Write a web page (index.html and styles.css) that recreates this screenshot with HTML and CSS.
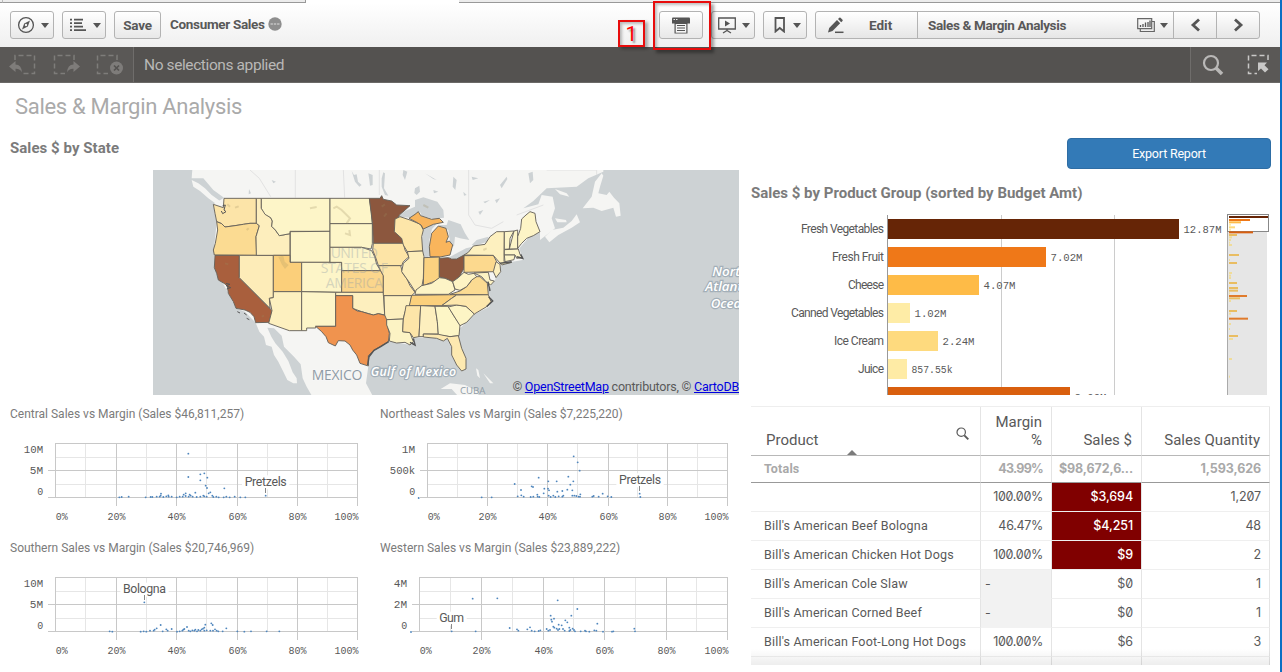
FILE: index.html
```html
<!DOCTYPE html>
<html lang="en">
<head>
<meta charset="utf-8">
<title>Consumer Sales - Sales &amp; Margin Analysis</title>
<link rel="stylesheet" href="styles.css">
</head>
<body>
<div class="app">
  <div class="tabstrip"><span class="tab-a"></span><span class="tab-b"></span><span class="tab-active"></span><span class="tab-rest"></span></div>

  <header class="toolbar">
    <button class="btn icon-btn">
      <svg width="18" height="18" viewBox="0 0 18 18"><circle cx="9" cy="9" r="7.4" fill="none" stroke="#555" stroke-width="1.3"/><path d="M13 4.5 10.8 10.6 5 13.5 7.2 7.4Z" fill="#555"/><circle cx="9" cy="9" r="1.2" fill="#eee"/></svg>
      <i class="caret"></i>
    </button>
    <button class="btn icon-btn">
      <svg width="18" height="14" viewBox="0 0 18 14"><path d="M1 2h2M1 5.500h2M1 9h2M1 12.500h2M5 2h9M5 5.500h8M5 9h9M5 12.500h12" stroke="#555" stroke-width="1.8" transform="translate(0 -.4)"/></svg>
      <i class="caret"></i>
    </button>
    <button class="btn save">Save</button>
    <span class="app-name">Consumer Sales</span>
    <svg class="more" width="14" height="14" viewBox="0 0 14 14"><circle cx="7" cy="7" r="6.700" fill="#8e8e8e"/><path d="M2.500 7h9" stroke="#ddd" stroke-width="1.200" stroke-dasharray="2.400 .9"/></svg>
    <span class="spacer"></span>
    <button class="btn icon-btn print">
      <svg width="18" height="17" viewBox="0 0 18 17"><path d="M0 1.500Q0 .5 1 .5H17q1 0 1 1V6.500H0Z" fill="#555"/><path d="M1.500 2.500h1.500M4 2.500h1.500" stroke="#eee" stroke-width="1.200"/><path d="M2.500 6h13v10.500h-13z" fill="#555"/><path d="M3.700 7h10.600v8.700H3.700z" fill="#f6f6f6"/><path d="M5 8.500h8M5 11h8M5 13.500h8" stroke="#555" stroke-width="1.200"/></svg>
    </button>
    <button class="btn icon-btn">
      <svg width="18" height="17" viewBox="0 0 18 17"><path d="M.7 1h16.600v11H.7zM9 12v2M5 16l4-2.500 4 2.500" fill="none" stroke="#555" stroke-width="1.300"/><path d="M7 3.500v6l5-3z" fill="#555"/></svg>
      <i class="caret"></i>
    </button>
    <button class="btn icon-btn mark">
      <svg width="12" height="16" viewBox="0 0 12 16"><path d="M1.500 1h8.500v13.500L5.750 11 1.500 14.500Z" fill="none" stroke="#555" stroke-width="1.800"/></svg>
      <i class="caret"></i>
    </button>
    <div class="group">
      <button class="seg edit">
        <svg width="17" height="17" viewBox="0 0 17 17"><path d="M1 15.500 2.200 11 10 3l3.200 3.200L5.500 14Z" fill="#555"/><path d="M11 2l1.300-1.200q.6-.5 1.200 0l2 2q.5.6 0 1.200L14.200 5.200Z" fill="#555"/><path d="M8 15.300h8.500" stroke="#555" stroke-width="1.500"/></svg>
        <span>Edit</span>
      </button>
      <button class="seg sheet"><span>Sales &amp; Margin Analysis</span>
        <svg width="18" height="15" viewBox="0 0 18 15"><path d="M.7.7h14v10h-14zM14.700 3.500h2.600v10h-14v-2.500" fill="none" stroke="#666" stroke-width="1.200"/><path d="M3.500 9V7M6 9V6M8.500 9V4.500M11 9V4M13 9V2.500" stroke="#555" stroke-width="1.300"/></svg>
        <i class="caret"></i></button>
      <button class="seg nav"><svg width="11" height="14" viewBox="0 0 11 14"><path d="M9 1.500 3 7l6 5.500" fill="none" stroke="#555" stroke-width="2.800"/></svg></button>
      <button class="seg nav"><svg width="11" height="14" viewBox="0 0 11 14"><path d="M2 1.500 8 7l-6 5.500" fill="none" stroke="#555" stroke-width="2.800"/></svg></button>
    </div>
    <div class="callout-box"></div>
    <div class="callout-num">1</div>
  </header>

  <div class="selections">
    <div class="sel-tools">
      <svg width="28" height="22" viewBox="0 0 28 22"><path d="M6 6V1.500H25.500V19.500H14" fill="none" stroke="#7e7c7a" stroke-width="1.500" stroke-dasharray="5 3"/><path d="M0 12.500 6.500 7v3.500q6 0 6.500 8-2-4-6.500-3.700V18Z" fill="#7e7c7a"/></svg>
      <svg width="28" height="22" viewBox="0 0 28 22"><path d="M21 6V1.500H1.500V19.500H12" fill="none" stroke="#7e7c7a" stroke-width="1.500" stroke-dasharray="5 3"/><path d="M27 12.500 20.500 7v3.500q-6 0-6.500 8 2-4 6.500-3.700V18Z" fill="#7e7c7a"/></svg>
      <svg width="28" height="22" viewBox="0 0 28 22"><path d="M21 6V1.500H1.500V19.500H12" fill="none" stroke="#7e7c7a" stroke-width="1.500" stroke-dasharray="5 3"/><circle cx="20.500" cy="14" r="6.500" fill="#7e7c7a"/><path d="m18 11.500 5 5m0-5-5 5" stroke="#555351" stroke-width="1.700"/></svg>
    </div>
    <div class="sel-text">No selections applied</div>
    <div class="sel-right">
      <svg width="22" height="22" viewBox="0 0 22 22"><circle cx="9" cy="9" r="7" fill="none" stroke="#b9b8b7" stroke-width="2.200"/><path d="m14 14 6 6" stroke="#b9b8b7" stroke-width="3.600"/></svg>
      <svg width="22" height="22" viewBox="0 0 22 22"><path d="M21 6V1.500H1.500V19.500H10" fill="none" stroke="#c9c8c7" stroke-width="1.500" stroke-dasharray="5 3"/><path d="M11 8.500h9l-2.500 2.700 4 4-3.500 3.300-4-4L11 17Z" fill="#c9c8c7"/></svg>
    </div>
  </div>

  <main class="sheet-area">
    <section class="left">
      <h1>Sales &amp; Margin Analysis</h1>
      <h2>Sales $ by State</h2>
      <div class="map">
        <svg width="586" height="225" viewBox="0 0 1758 675" id="map">
          <rect width="1758" height="675" fill="#cdd2d4"/>
          <g transform="translate(-9 -15)" stroke-linejoin="round">
            <path class="land" d="M128 0 125 40 160 40 190 75 222 98 190 118 200 175 193 240 193 308 235 385 258 430 285 440 317 473 328 500 342 515 348 540 365 545 372 570 385 590 400 620 412 645 430 655 441 655 440 640 428 622 415 588 398 560 376 535 364 515 352 488 372 490 395 512 402 545 432 575 452 598 458 640 470 665 490 700H672L648 655 655 603 655 570 690 545 718 528 780 540 795 530 790 518 892 520 905 545 905 572 920 600 935 618 948 612 948 580 935 550 925 515 930 490 975 447 1018 425 1025 405 1012 375 1035 345 1048 310 1060 295 1118 285 1108 250 1135 218 1170 202 1170 225 1215 190 1205 160 1215 130 1208 95 1175 90 1165 118 1120 130 1150 108 1190 70 1280 65 1315 40 1360 20V0Z"/>
            <path class="land" d="M125 45 145 55 165 70 185 90 210 108 200 118 175 100 150 78 130 65Z"/>
            <path class="land" d="M1298 130 1325 95 1335 50 1355 25 1360 32 1350 65 1345 85 1370 90 1378 80 1392 98 1408 115 1412 152 1398 155 1390 128 1355 138 1330 128Z"/>
            <path class="land" d="M1185 215 1205 195 1240 188 1265 168 1280 148 1290 172 1265 188 1225 210 1198 232ZM1215 72 1250 85 1258 95 1230 88ZM1215 160 1248 165 1250 172 1222 172Z"/>
            <path class="land" d="M872 672 900 655 945 660 985 680 985 700H930L905 672ZM978 610 985 615 990 640 982 632ZM1000 625 1030 655 1020 655Z"/>
            <path class="river" d="M300 15 328 40 362 95M436 15V98M580 15 584 98M688 15V90M956 15V150L975 180 1025 190 1060 170M1100 150 1180 120M1190 15H1340V30"/>
            <path class="water" d="M605 18 612 30 620 28 624 50 635 60 628 65 615 50ZM655 25 668 30 668 60 660 62 658 45ZM695 40 700 22 705 25 702 70 715 92 705 90 695 65ZM795 70 808 62 810 80 800 90 793 84ZM760 15 772 20 765 45 758 30ZM1050 60 1070 35 1072 42 1055 70ZM1135 25 1148 20 1150 45 1140 55ZM910 35 920 45 916 75 908 65ZM825 25 860 45 850 42ZM1000 110 1020 105 1005 115ZM850 75 865 80 852 85ZM940 80 950 90 942 92ZM965 35 985 40 968 45ZM1035 105 1050 100 1040 115ZM985 140 1000 135 990 150ZM297 72 303 85 296 88ZM365 45 378 50 370 55Z"/>
            <path class="water" d="M742 155 765 138 795 125 795 105 820 97 862 110 880 135 882 158 850 162 815 152 810 140 780 158ZM820 192 835 182 862 175 846 192 838 225 840 272 828 279 818 268 815 235ZM865 180 890 180 895 165 932 178 945 205 958 225 930 220 915 215 912 245 900 230 895 195ZM895 278 920 265 948 250 968 245 955 265 920 282ZM965 240 980 225 1015 215 1012 230 975 242Z"/>
          </g>
          <g id="states" transform="translate(-9 -15)"></g>
          <g transform="translate(-9 -15)">
            <path d="M218 122 226 120 222 135 228 140 218 146 214 138M228 355 240 358 228 362 242 368 230 372M262 440 270 444M282 444 290 450M290 460 298 464" fill="none" stroke="#555" stroke-width="3"/>
            <path d="M653 600 657 575 672 556 692 545 716 530M780 532 795 540 790 520M1014 350 1020 378M1016 395 1028 408 1010 425M1050 295 1085 290M1100 275 1118 280 1112 268" fill="none" stroke="#555" stroke-width="4.500"/>
            <path d="M232 118 240 125M255 128 266 124M290 195 296 190M480 130 500 126M550 130 560 125 575 135 600 160 590 175M585 205 600 210 598 195M225 295 235 298M335 455 342 452M695 125 705 118M710 145 702 155M1000 255 1010 250M820 120 835 128" fill="none" stroke="#9a8a60" stroke-opacity=".25" stroke-width="6"/>
            <path d="M385 275 400 272 404 290 416 300 405 312 395 298Z" fill="#d9b870" opacity=".6"/>
            <g class="maplabel country">
              <text x="542" y="280" textLength="142" opacity=".36">UNITED</text>
              <text x="512" y="324" textLength="202" opacity=".36">STATES OF</text>
              <text x="527" y="368" textLength="172" opacity=".36">AMERICA</text>
              <text x="485" y="645" textLength="152" class="halo">MEXICO</text>
              <text x="930" y="686" textLength="76" class="cuba">CUBA</text>
            </g>
            <g class="maplabel sea">
              <text x="662" y="633" class="gulf" textLength="256">Gulf of Mexico</text>
              <text x="1687" y="332">North</text>
              <text x="1666" y="379">Atlantic</text>
              <text x="1682" y="428">Ocean</text>
            </g>
          </g>
        </svg>
        <div class="credit">© <a>OpenStreetMap</a> contributors, © <a>CartoDB</a></div>
      </div>
      <div class="scatters">
        <article><h3 class="t1">Central Sales vs Margin (Sales $46,811,257)</h3><svg class="scatter" id="s1" width="370" height="100" viewBox="0 90 1110 300"></svg></article>
        <article><h3 class="t2">Northeast Sales vs Margin (Sales $7,225,220)</h3><svg class="scatter" id="s2" width="365" height="100" viewBox="0 90 1095 300"></svg></article>
        <article><h3 class="t3">Southern Sales vs Margin (Sales $20,746,969)</h3><svg class="scatter" id="s3" width="370" height="100" viewBox="0 90 1110 300"></svg></article>
        <article><h3 class="t4">Western Sales vs Margin (Sales $23,889,222)</h3><svg class="scatter" id="s4" width="365" height="100" viewBox="0 90 1095 300"></svg></article>
      </div>
    </section>

    <section class="right">
      <button class="export">Export Report</button>
      <h2 class="bar-title">Sales $ by Product Group (sorted by Budget Amt)</h2>
      <svg class="bars" id="bars" width="520" height="182" viewBox="751 213 520 182"></svg>
      <div class="table-wrap">
        <table>
          <colgroup><col class="c1"><col class="c2"><col class="c3"><col class="c4"></colgroup>
          <thead>
            <tr class="head"><th><div class="prod"><span>Product</span><svg width="13" height="13" viewBox="0 0 13 13"><circle cx="5.200" cy="5.200" r="4.200" fill="none" stroke="#595959" stroke-width="1.200"/><path d="m8.300 8.300 4 4" stroke="#595959" stroke-width="1.900"/></svg></div><i class="sort"></i></th><th>Margin<br>%</th><th>Sales $</th><th>Sales Quantity</th></tr>
            <tr class="totals"><td>Totals</td><td>43.99%</td><td>$98,672,6...</td><td>1,593,626</td></tr>
          </thead>
          <tbody>
            <tr><td></td><td>100.00%</td><td class="neg">$3,694</td><td>1,207</td></tr>
            <tr><td>Bill's American Beef Bologna</td><td>46.47%</td><td class="neg">$4,251</td><td>48</td></tr>
            <tr><td>Bill's American Chicken Hot Dogs</td><td>100.00%</td><td class="neg">$9</td><td>2</td></tr>
            <tr><td>Bill's American Cole Slaw</td><td class="null">-</td><td>$0</td><td>1</td></tr>
            <tr><td>Bill's American Corned Beef</td><td class="null">-</td><td>$0</td><td>1</td></tr>
            <tr><td>Bill's American Foot-Long Hot Dogs</td><td>100.00%</td><td>$6</td><td>3</td></tr>
            <tr><td></td><td></td><td></td><td></td></tr>
          </tbody>
        </table>
      </div>
    </section>
  </main>
</div>
<script src="charts.js"></script>
</body>
</html>
```
FILE: styles.css
```css
* { box-sizing: border-box; }
body { margin: 0; background: #fff; font-family: Roboto, "Liberation Sans", sans-serif; color: #595959; }
button { font: inherit; color: inherit; margin: 0; padding: 0; }
.app { width: 1282px; height: 672px; overflow: hidden; border-right: 2px solid #0a6fc4; background: #fff; }

.tabstrip { display: flex; height: 3px; background: #fff; }
.tabstrip span { background: #ececec; border-bottom: 1px solid #999; height: 3px; }
.tab-a { width: 3px; border-right: 1px solid #bbb; }
.tab-b { width: 303px; border-right: 1px solid #999; }
.tabstrip .tab-active { width: 153px; background: #fff; border: 0; }
.tab-rest { flex: 1; }

.toolbar { position: relative; display: flex; align-items: flex-start; height: 44px; padding: 8px 20px 0 10px; background: linear-gradient(#fff, #f0f0f0); }
.btn { height: 28px; border: 1px solid #b3b3b3; border-radius: 3px; background: linear-gradient(#fff, #e8e8e8); font-weight: 700; font-size: 13.500px; margin-right: 8px; }
.icon-btn { width: 44px; display: flex; align-items: center; justify-content: center; gap: 6px; padding-left: 1px; }
.caret { border: 4px solid transparent; border-top: 5px solid #555; border-bottom: 0; margin-top: 1px; }
.save { width: 47px; letter-spacing: -.2px; }
.app-name { font-weight: 700; font-size: 13.500px; line-height: 27px; margin-left: 1px; letter-spacing: -.32px; }
.more { margin: 6px 0 0 3px; }
.spacer { flex: 1; }
.print { padding: 0; }
.mark { gap: 7px; padding-left: 5px; }
.group { display: flex; height: 28px; width: 445px; border: 1px solid #b3b3b3; border-radius: 3px; background: linear-gradient(#fff, #e6e6e6); }
.seg { border: 0; border-left: 1px solid #b3b3b3; background: none; display: flex; align-items: center; font-weight: 700; font-size: 13.500px; }
.seg > span { margin-top: -1px; }
.edit { width: 101px; border-left: 0; padding-left: 11px; gap: 25px; }
.sheet { width: 256px; padding-left: 10px; }
.sheet span { flex: 1; text-align: left; letter-spacing: -.37px; }
.sheet .caret { margin: 0 5px 0 5px; }
.nav { width: 43px; justify-content: center; }
.callout-box { position: absolute; left: 653px; top: -2px; width: 58px; height: 49px; border: 2px solid #e80c0c; box-shadow: 3px 3px 3px rgba(0,0,0,.35), inset 2px 2px 3px rgba(0,0,0,.25); }
.callout-num { position: absolute; left: 618px; top: 17px; width: 27px; height: 27px; border: 2px solid #e80c0c; color: #f00; font: 21px/25px Roboto, sans-serif; text-align: center; text-shadow: 2px 2px 2px rgba(0,0,0,.4); box-shadow: 3px 2px 3px rgba(0,0,0,.3), inset 2px 2px 3px rgba(0,0,0,.25); }

.selections { display: flex; height: 36px; background: #545250; border-bottom: 1px solid #6b6967; color: #b9b8b7; }
.sel-tools { display: flex; gap: 15.500px; width: 134px; padding: 7px 0 0 9px; background: #5a5856; border-right: 1px solid #6f6d6b; }
.sel-text { flex: 1; padding-left: 10px; font-size: 15.500px; line-height: 37px; letter-spacing: -.4px; }
.sel-right { display: flex; gap: 23px; width: 90px; padding: 7px 0 0 11px; background: #5a5856; border-left: 1px solid #6f6d6b; }

.sheet-area { display: flex; height: 589px; }
.left { width: 751px; }
h1 { margin: 0; padding-left: 15px; font-size: 22px; font-weight: 400; line-height: 48px; height: 48px; color: #aaa; letter-spacing: -.3px; }
h2 { margin: 0; font-size: 15px; line-height: 18px; color: #7b7b7b; }
.left h2 { padding: 8px 0 0 10px; height: 39px; letter-spacing: .05px; }
.map { position: relative; width: 586px; height: 225px; margin-left: 153px; overflow: hidden; }
.map svg { display: block; }
.land { fill: #f5f5f3; }
.water { fill: #cdd2d4; }
.river { fill: none; stroke: #e2e2e2; stroke-width: 3; }
.maplabel { font-family: "Open Sans", sans-serif; font-size: 42px; }
.country { fill: #8f9ba5; }
.halo { paint-order: stroke; stroke: #f7f7f7; stroke-width: 5px; font-weight: 500; }
.cuba { font-size: 29px; }
.sea { fill: #fff; font-style: italic; font-weight: 600; font-size: 40px; paint-order: stroke; stroke: #a3afb8; stroke-width: 7px; }
.gulf { font-size: 37px; }
.credit { position: absolute; right: 0; bottom: 0; height: 16px; line-height: 16px; font-size: 12.500px; letter-spacing: -.23px; white-space: nowrap; }
.credit a { color: #0000e0; text-decoration: underline; }

.scatters { display: grid; grid-template-columns: 375px 376px; grid-template-rows: 134px 134px; }
h3 { margin: 0; padding: 10px 0 0 10px; height: 35px; font-size: 12px; font-weight: 400; line-height: 18px; color: #7b7b7b; white-space: nowrap; }
.t2, .t4 { padding-left: 5px; }
.scatter { display: block; font: 30px "Liberation Mono", monospace; fill: #595959; }
.scatter .name { font: 37px Roboto, sans-serif; }

.right { width: 520px; padding-top: 55px; display: flex; flex-direction: column; }
.export { align-self: flex-end; width: 204px; height: 31px; border: 1px solid #2e6da4; border-radius: 4px; background: #337ab7; color: #fff; font-size: 12.500px; letter-spacing: -.2px; line-height: 28px; }
.bar-title { margin-top: 15px; height: 29px; white-space: nowrap; }
.bars { display: block; font: 12px Roboto, sans-serif; fill: #595959; }
.bars .num { font: 11.500px "Liberation Mono", monospace; }
.table-wrap { position: relative; margin-top: 11px; width: 519px; height: 259px; overflow: hidden; }
.table-wrap::after { content: ""; position: absolute; inset: auto 0 0 0; height: 16px; background: linear-gradient(rgba(0,0,0,0), rgba(0,0,0,.07)); }
table { border-collapse: separate; border-spacing: 0; table-layout: fixed; width: 519px; font-size: 12.500px; border-top: 1px solid #eee; }
.c1 { width: 230px; } .c2 { width: 71px; } .c3 { width: 90px; } .c4 { width: 128px; }
td, th { padding: 0 8px 1px; border-right: 1px solid #e4e4e4; border-bottom: 1px solid #efefef; text-align: right; white-space: nowrap; height: 29px; }
td + td { font-family: Inter, sans-serif; font-size: 12.500px; letter-spacing: -.1px; font-feature-settings: "zero"; }
td:nth-child(2) { letter-spacing: -.3px; }
td:first-child { text-align: left; padding-left: 13px; letter-spacing: .18px; }
.head th { height: 49px; font-weight: 400; font-size: 15px; line-height: 18px; vertical-align: bottom; padding: 0 9px 6px 0; border-bottom: 1px solid #b8b8b8; position: relative; }
.prod { display: flex; justify-content: space-between; padding: 0 2px 0 15px; }
.prod svg { margin-top: -4px; }
.sort { position: absolute; left: 96px; bottom: 0; border: 5px solid transparent; border-top: 0; border-bottom-color: #7b7b7b; }
.totals td { height: 27px; font-weight: 700; color: #a9a9a9; border-bottom: 1px solid #999; }
.totals td:nth-child(2) { letter-spacing: -.75px; }
.totals td:nth-child(3) { padding: 0 8px 1px 0; }
.neg { background: #800000; color: #fff; font-weight: 500; }
td.null { background: #f2f2f2; text-align: left; padding-left: 4px; border-bottom-color: #f2f2f2; }
```
FILE: charts.js
```js
const P = '#fdf5c8';
const states = [
  ['#fce4a8', '190,118 220,128 222,100 319,100 319,175 300,175 280,178 255,182 225,186 215,176 200,170 195,145'],
  ['#fbdb92', '200,170 215,176 225,186 255,182 280,178 300,175 319,175 328,182 318,215 320,271 193,270 190,255 196,235 203,195'],
  ['#a95f3d', '195,271 268,271 268,338 366,437 360,472 317,473 312,455 300,442 285,435 258,430 250,410 235,385 232,362 222,355 205,345 200,325 193,308'],
  ['#fdecb8', '268,271 370,271 370,398 358,400 360,430 268,338'],
  ['#fdeebd', '319,100 334,100 334,130 350,150 362,158 367,168 365,184 376,195 388,212 420,206 420,271 319,271 318,215 328,182 319,175'],
  [P, '334,100 540,100 540,199 420,199 420,206 388,212 376,195 365,184 367,168 362,158 345,148 334,130'],
  [P, '421,200 540,199 540,292 421,292'],
  ['#fbcf7a', '370,271 420,271 420,292 455,292 455,380 370,380'],
  [P, '455,292 575,292 575,382 455,380'],
  ['#fdf0bf', '370,380 455,380 455,497 418,497 356,475 366,437 358,400 370,398'],
  [P, '455,380 557,382 557,484 497,484 497,489 470,489 470,497 455,497'],
  [P, '540,100 658,100 664,140 667,176 540,176'],
  [P, '540,176 667,176 667,236 663,252 635,247 540,247'],
  [P, '540,247 635,247 665,257 674,275 680,298 692,317 575,317 575,292 540,292'],
  ['#fbd68c', '575,317 692,317 700,332 700,382 575,382'],
  ['#fdefbe', '557,382 700,382 704,450 685,446 670,450 635,440 608,430 608,392 557,392'],
  ['#f0934e', '557,392 608,392 608,430 622,438 635,440 655,446 670,450 685,446 710,452 712,480 718,505 715,530 690,545 672,556 655,572 655,603 630,595 620,570 608,555 600,540 585,528 565,527 556,543 535,533 528,515 515,500 497,484 557,484'],
  ['#8c573e', '658,100 690,100 695,92 700,103 725,108 740,120 780,122 762,138 748,150 735,180 735,200 755,220 760,235 670,235 668,180'],
  ['#fde4a6', '670,235 760,235 765,255 777,275 760,290 755,302 685,302 678,280 668,255'],
  ['#fde5a8', '685,302 752,302 758,325 770,340 780,362 795,382 785,392 700,392 700,332 692,317'],
  ['#fdefbe', '702,392 785,392 780,420 765,440 760,462 710,464 704,450'],
  ['#fcf3c4', '710,464 760,462 758,500 780,503 790,530 780,540 765,532 740,534 718,528 720,505 710,480'],
  ['#fde6a9', '735,162 750,155 780,165 812,178 820,195 815,215 818,258 772,260 760,240 755,220 733,200'],
  ['#f9b55c', '777,160 795,148 805,140 812,152 845,163 868,160 880,172 850,178 820,192 813,180 800,172'],
  ['#f9b55c', '840,275 838,245 845,205 865,183 888,190 895,215 888,232 898,228 908,240 900,270 870,276'],
  ['#fdedb9', '772,260 818,258 822,275 820,340 815,368 798,384 780,355 755,320 760,295 777,280'],
  ['#fbd280', '822,278 868,276 868,338 858,348 845,352 820,362'],
  ['#8c573e', '868,280 895,278 905,282 920,282 942,270 942,310 928,335 908,350 885,340 868,336'],
  ['#fdf4c6', '795,388 798,375 815,362 845,355 868,338 885,340 908,350 915,375 895,388'],
  ['#fbd07c', '785,391 920,389 905,400 875,422 778,422'],
  ['#fde5a8', '768,422 812,422 807,515 790,518 780,503 758,500 760,462 765,440'],
  ['#fdefbe', '812,422 855,424 862,470 865,507 820,507 820,515 807,515'],
  ['#fdf6c6', '855,424 895,424 910,450 930,480 927,512 900,515 865,510 862,470'],
  ['#fde9b0', '820,507 865,508 900,515 925,512 935,550 948,580 948,612 935,618 920,600 905,570 905,545 892,520 880,528 860,520 820,516'],
  ['#fdf5c5', '895,426 920,420 948,424 973,447 950,472 930,482 910,450'],
  ['#fde7ac', '875,422 905,400 920,390 1015,389 1023,410 1010,425 973,447 948,424 920,420'],
  ['#fbdb92', '900,388 930,378 950,365 962,350 970,335 990,335 1012,355 1015,389'],
  ['#fdf3c4', '908,350 925,338 942,322 955,328 972,325 980,335 965,345 950,365 930,376 915,372'],
  ['#fdf3c4', '972,324 1015,322 1020,345 1033,348 1022,360 1008,350 995,335'],
  ['#fcd98e', '942,272 1030,271 1040,290 1035,320 942,322'],
  ['#fdf0bf', '942,270 955,262 970,243 1005,238 1020,215 1040,200 1063,200 1062,290 1070,295 1085,292 1055,300 1030,271'],
  ['#fdf0bf', '1038,290 1050,298 1052,320 1038,338 1030,320'],
  [P, '1063,200 1092,198 1080,220 1078,252 1063,253'],
  [P, '1092,198 1103,195 1103,252 1078,252'],
  [P, '1063,254 1105,252 1110,268 1118,278 1100,280 1095,270 1063,270'],
  [P, '1063,270 1095,270 1092,284 1065,290'],
  ['#fdf4c6', '1103,250 1103,215 1112,190 1115,162 1128,150 1140,140 1155,145 1158,170 1170,200 1150,212 1130,220 1115,235']
];
document.getElementById('states').innerHTML = states.map(([c, p]) =>
  `<polygon points="${p}" fill="${c}" stroke="#66625a" stroke-width="2.800" stroke-linejoin="round"/>`).join('');

// Scatter plots: gridline positions, axis labels, named point, data points
function scatter(id, c) {
  const v = c.x, H = [130.5, 211.5, 292.5], out = [];
  const line = (x1, y1, x2, y2, col) => out.push(`<path d="M${x1} ${y1}L${x2} ${y2}" stroke="${col}" stroke-width="3" shape-rendering="crispEdges"/>`);
  const L = v[0], R = v[5];
  [172.5, 253.5].forEach(y => line(L, y, R, y, '#e6e6e6'));
  for (let i = 0; i < 5; i++) { const m = Math.round((v[i] + v[i + 1]) / 6) * 3 + 1.5 - 3; line(m, 130, m, 292, '#e6e6e6'); }
  H.forEach((y, i) => line(i ? L - 24 : L, y, R, y, '#c8c8c8'));
  v.forEach((x, i) => line(x, 130, x, i ? 318 : 292, '#c8c8c8'));
  c.y.forEach((t, i) => { const w = t.length * 18 + (t.length > 1 ? 4 : 0); out.push(`<text x="${L - 37 - w}" y="${[159, 222, 285][i]}" textLength="${w}" lengthAdjust="spacingAndGlyphs">${t}</text>`); });
  ['0%', '20%', '40%', '60%', '80%', '100%'].forEach((t, i) => {
    const w = t.length * 18, x = i === 0 ? L + 1 : i === 5 ? R - w + 3 : v[i] - w / 2;
    out.push(`<text x="${x}" y="360" textLength="${w}" lengthAdjust="spacingAndGlyphs">${t}</text>`);
  });
  const [n, nx, ny, nw, px] = c.name;
  out.push(`<rect x="${nx - 8}" y="${ny - 32}" width="${nw + 16}" height="42" fill="#fff"/><text class="name" x="${nx}" y="${ny}" textLength="${nw}">${n}</text>`);
  line(px, ny + 6, px, ny + 20, '#888');
  c.p.trim().split(/\s+/).forEach(s => { const [x, y] = s.split(','); out.push(`<circle cx="${x}" cy="${y}" r="2.800" fill="#4f86bd"/>`); });
  document.getElementById(id).innerHTML = out.join('');
}
scatter('s1', { x: [166.5, 349.5, 529.5, 712.5, 892.5, 1072.5], y: ['10M', '5M', '0'], name: ['Pretzels', 734, 258, 126, 796.5],
  p: '565,161 565,231 601,223 613,220 622,233 601,241 617,257 621,264 673,265 586,278 631,277 626,280 557,280 569,284 483,281 797,287 358,292 365,291 386,290 437,292 452,291 457,291 470,290 479,290 482,287 490,291 499,289 505,286 506,290 515,290 530,292 539,290 548,290 551,284 557,288 566,290 572,287 578,290 590,291 601,290 610,287 613,289 620,290 637,287 640,291 649,290 656,292 671,292 679,290 689,292 704,290 721,292 736,292' });
scatter('s2', { x: [157.5, 337.5, 517.5, 700.5, 877.5, 1057.5], y: ['1M', '500k', '0'], name: ['Pretzels', 732, 252, 126, 793.5],
  p: '131,294 320,292 350,292 419,252 438,270 428,289 439,286 446,290 470,259 474,261 491,233 508,266 506,280 520,244 519,266 522,271 545,244 547,275 562,273 577,269 580,230 586,254 595,244 592,271 596,169 608,187 614,212 487,284 488,290 467,291 475,290 493,291 521,287 527,291 535,287 541,291 551,289 562,290 565,287 592,287 598,287 604,288 611,290 616,283 615,290 652,290 656,288 671,290 683,281 698,289 709,291 794,281 796,291' });
scatter('s3', { x: [166.5, 349.5, 529.5, 712.5, 892.5, 1072.5], y: ['10M', '5M', '0'], name: ['Bologna', 369, 178, 129, 433.5],
  p: '433,205 329,292 337,293 422,293 431,292 439,293 450,290 461,290 464,287 470,283 482,273 488,292 499,286 503,290 515,285 531,293 539,292 547,290 550,287 553,285 561,279 566,290 571,292 577,289 583,290 586,287 591,292 595,288 601,290 605,286 609,284 613,281 616,272 613,290 620,289 634,268 638,273 631,290 639,290 645,286 650,290 655,292 668,292 679,283 712,292 733,293 753,292 800,292 838,292' });
scatter('s4', { x: [133.5, 319.5, 505.5, 688.5, 874.5, 1057.5], y: ['4M', '2M', '0'], name: ['Gum', 193, 265, 74, 229.5],
  p: '293,194 367,193 548,199 607,225 527,245 589,245 537,254 529,257 531,263 571,259 577,265 667,269 108,294 230,292 302,292 404,282 426,286 430,290 457,286 465,280 470,290 479,292 491,291 496,289 515,285 520,290 525,288 535,278 538,281 545,284 549,288 551,272 560,274 553,285 564,285 569,290 583,281 586,288 583,291 593,284 597,288 600,292 617,292 630,290 633,292 643,293 658,289 664,290 684,293 711,293 715,292 778,284 780,292' });

// Product group bars
const b = [];
[1001.5, 1114.5].forEach(x => b.push(`<path d="M${x} 215V395" stroke="#ccc"/>`));
[['Fresh Vegetables', 83, 1179, '#662506', '12.87M', 38], ['Fresh Fruit', 52, 1046, '#ef7818', '7.02M', 32], ['Cheese', 36, 979, '#febb47', '4.07M', 32],
 ['Canned Vegetables', 93, 910, '#feeca6', '1.02M', 32], ['Ice Cream', 50, 938, '#feda7e', '2.24M', 32], ['Juice', 26, 907, '#feeba5', '857.55k', 41], ['', 0, 1070, '#d95f0e', '8.09M', 32]
].forEach(([n, w, x, c, v, vw], i) => {
  const y = 219 + i * 28;
  b.push(`<rect x="888" y="${y}" width="${x - 888}" height="20" fill="${c}"/>`);
  if (n) b.push(`<text x="${884 - w}" y="${y + 14}" textLength="${w}">${n}</text>`);
  b.push(`<text class="num" x="${x + 4.5}" y="${y + 14}" textLength="${vw}" lengthAdjust="spacingAndGlyphs">${v}</text>`);
});
b.push('<path d="M887.500 215V395" stroke="#999"/><rect x="1227" y="214" width="40" height="181" fill="#e6e6e6"/><path d="M1227.500 214V395" stroke="#aaa"/><rect x="1227.500" y="214.500" width="41" height="17" fill="#fff" stroke="#888"/>');
const O = '#e07b2c', Y = '#e9bd62', F = '#f0dc9a';
[[111, 39, '#662506'], [120, 21, '#ef7818'], [127, 12, '#febb47'], [134, 2, '#feeca6'], [142, 6, '#feda7e'], [149, 2, '#feeca6'], [157, 24, '#d95f0e'], [165, 8, Y], [172, 3, F], [180, 2, F], [188, 1, F], [195, 3, F], [225, 10, Y], [240, 1, F], [249, 8, Y], [279, 3, F], [287, 2, F], [294, 2, F], [309, 8, Y], [324, 9, Y], [332, 9, Y], [340, 1, F], [348, 18, O], [355, 11, Y], [363, 2, F], [393, 8, Y], [401, 2, F], [416, 19, O], [432, 2, F], [447, 1, F], [468, 9, Y], [477, 4, F], [537, 3, F], [590, 1, F]
].forEach(([y, w, c]) => b.push(`<rect x="1229" y="${180 + y / 3 - 1}" width="${w}" height="2" fill="${c}"/>`));
document.getElementById('bars').innerHTML = b.join('');
```
